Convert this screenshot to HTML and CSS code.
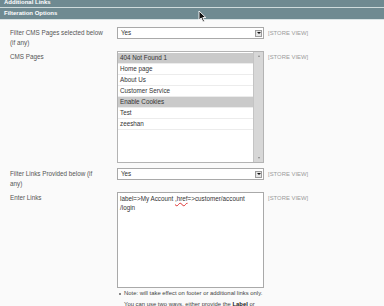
FILE: index.html
```html
<!DOCTYPE html>
<html lang="en">
<head>
    <meta charset="UTF-8">
    <title>Additional Links</title>
    <link rel="stylesheet" href="styles.css">
</head>
<body>
    <div class="head head-top">Additional Links</div>
    <div class="head head-sub">Filteration Options</div>

    <div class="form">
        <div class="row row-1">
            <div class="label">Filter CMS Pages selected below (if any)</div>
            <div class="value">
                <div class="select">Yes<span class="arrow"></span></div>
            </div>
            <div class="scope">[STORE VIEW]</div>
        </div>

        <div class="row row-2">
            <div class="label">CMS Pages</div>
            <div class="value">
                <div class="multi">
                    <ul class="options">
                        <li class="on">404 Not Found 1</li>
                        <li>Home page</li>
                        <li>About Us</li>
                        <li>Customer Service</li>
                        <li class="on">Enable Cookies</li>
                        <li>Test</li>
                        <li>zeeshan</li>
                    </ul>
                    <div class="scroll">
                        <span class="up"></span>
                        <span class="down"></span>
                    </div>
                </div>
            </div>
            <div class="scope">[STORE VIEW]</div>
        </div>

        <div class="row row-3">
            <div class="label">Filter Links Provided below (if any)</div>
            <div class="value">
                <div class="select">Yes<span class="arrow"></span></div>
            </div>
            <div class="scope">[STORE VIEW]</div>
        </div>

        <div class="row row-4">
            <div class="label">Enter Links</div>
            <div class="value">
                <div class="textarea">label=&gt;My Account <span class="typo">,href</span>=&gt;customer/account<br>/login</div>
                <p class="note">Note: will take effect on footer or additional links only.<br>You can use two ways, either provide the <b>Label</b> or</p>
            </div>
            <div class="scope">[STORE VIEW]</div>
        </div>
    </div>

    <svg class="cursor" width="9" height="13" viewBox="0 0 9 13">
        <path d="M1 1 L1 10 L3.2 8 L5 12 L6.5 11.3 L4.8 7.5 L7.8 7.5 Z" fill="#111" stroke="#fff" stroke-width="0.9"/>
    </svg>
</body>
</html>
```

FILE: styles.css
```css
body{
    margin: 0;
    background: #fafafa;
    font-family: "Liberation Sans", Arial, sans-serif;
    font-size: 6.3px;
    color: #555;
    overflow: hidden;
    position: relative;
    height: 306px;
}
.head{
    background: #6f8a91;
    color: #fff;
    font-weight: bold;
    font-size: 6px;
    padding-left: 4px;
}
.head-top{
    height: 7px;
    line-height: 5px;
    border-bottom: 1px solid #cfdbdc;
}
.head-sub{
    height: 11px;
    line-height: 11px;
    border-bottom: 1px solid #d9e3e4;
}
.form{
    padding: 7px 0 0 10px;
}
.row{
    display: flex;
    align-items: flex-start;
}
.label{
    width: 95px;
    margin-right: 12px;
    line-height: 10px;
    padding-top: 1px;
}
.value{
    width: 147px;
}
.scope{
    margin-left: 4px;
    font-size: 5.9px;
    color: #9a9a9a;
    padding-top: 3px;
}
.row-1{
    height: 24px;
}
.row-2{
    height: 117px;
}
.row-3{
    height: 24px;
}
.row-3 .label{
    line-height: 9.5px;
}
.select{
    height: 10px;
    line-height: 10px;
    border: 1px solid #a9a9a9;
    background: #fff;
    padding-left: 3px;
    color: #333;
    display: flex;
    justify-content: space-between;
    align-items: center;
}
.arrow{
    width: 7px;
    height: 7px;
    margin-right: 1px;
    background: #e4e4e4;
    border: 1px solid #9c9c9c;
    box-sizing: border-box;
    display: flex;
    justify-content: center;
    align-items: center;
}
.arrow::after{
    content: "";
    border-left: 2px solid transparent;
    border-right: 2px solid transparent;
    border-top: 2px solid #111;
}
.multi{
    height: 110px;
    border: 1px solid #b3b3b3;
    background: #fff;
    display: flex;
}
.options{
    list-style: none;
    margin: 0;
    padding: 1px 0 0 0;
    flex: 1;
}
.options li{
    height: 10px;
    line-height: 10px;
    padding-left: 2px;
    border-bottom: 1px solid #ececec;
    color: #333;
}
.options li.on{
    background: #cacaca;
}
.scroll{
    width: 9px;
    background: #d7d7d7;
    border-left: 1px solid #c4c4c4;
    display: flex;
    flex-direction: column;
    justify-content: space-between;
    align-items: center;
    padding: 3px 0;
}
.up, .down{
    width: 0;
    height: 0;
    border-left: 1.5px solid transparent;
    border-right: 1.5px solid transparent;
}
.up{
    border-bottom: 2px solid #888;
}
.down{
    border-top: 2px solid #888;
}
.textarea{
    height: 90px;
    border: 1px solid #a9a9a9;
    background: #fff;
    padding: 2px 2px;
    line-height: 8.5px;
    color: #333;
}
.typo{
    text-decoration: underline wavy #d33;
    text-decoration-thickness: 0.6px;
}
.note{
    margin: 0 0 0 2px;
    padding-left: 5px;
    font-size: 5.9px;
    line-height: 11px;
    color: #444;
    white-space: nowrap;
    position: relative;
}
.note::before{
    content: "";
    position: absolute;
    left: 0;
    top: 5px;
    width: 2px;
    height: 2px;
    background: #888;
}
.note b{
    color: #222;
}
.cursor{
    position: absolute;
    left: 198px;
    top: 10px;
}
```
